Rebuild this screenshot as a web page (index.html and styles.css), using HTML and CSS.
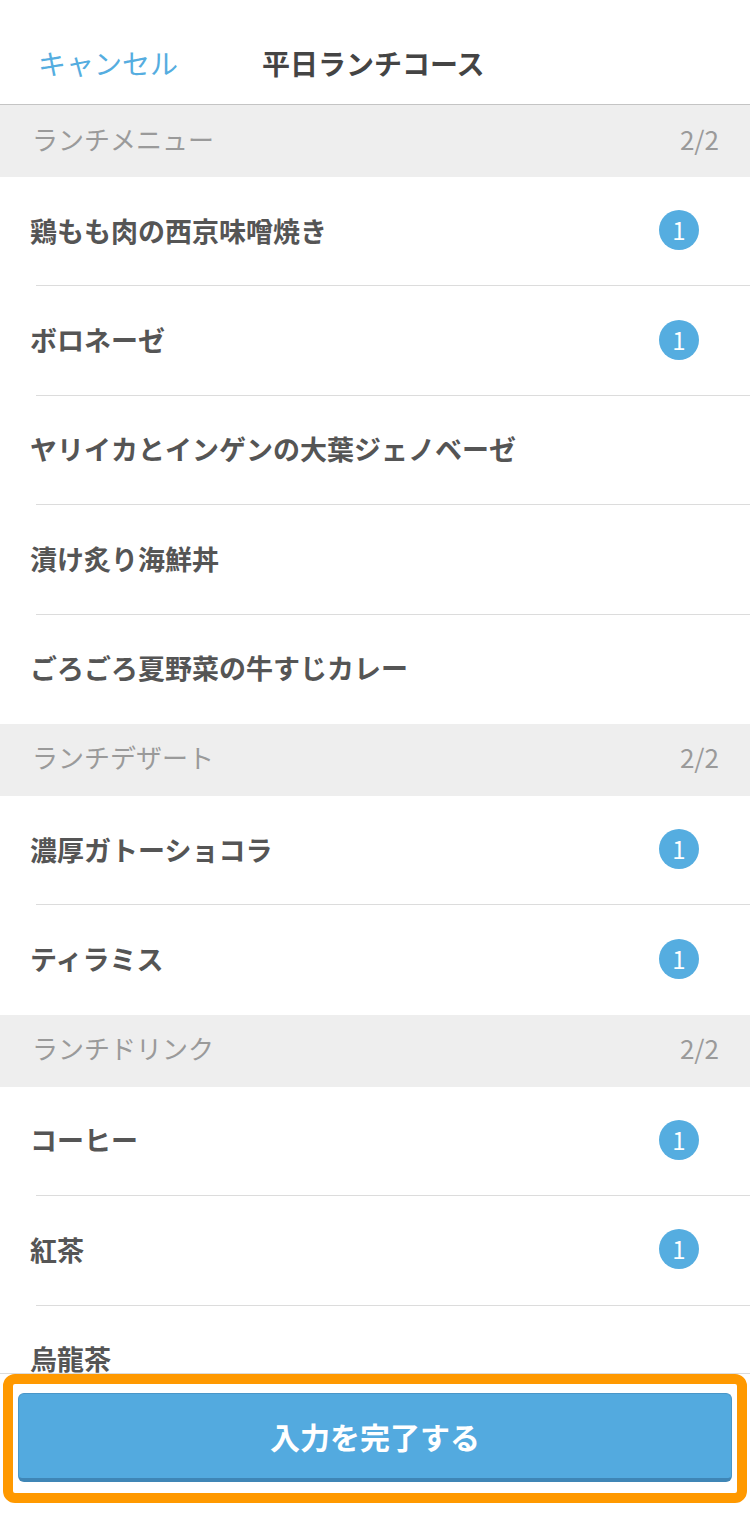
FILE: index.html
```html
<!DOCTYPE html>
<html lang="ja">
<head>
<meta charset="utf-8">
<title>平日ランチコース</title>
<link rel="stylesheet" href="styles.css">
</head>
<body>
<div class="screen">
  <header class="nav">
    <span class="nav-cancel">キャンセル</span>
    <span class="nav-title">平日ランチコース</span>
  </header>

  <main class="list">
    <section class="group">
      <div class="group-head"><span>ランチメニュー</span><span class="count">2/2</span></div>
      <ul class="items">
        <li class="item"><span>鶏もも肉の西京味噌焼き</span><span class="badge">1</span></li>
        <li class="item"><span>ボロネーゼ</span><span class="badge">1</span></li>
        <li class="item"><span>ヤリイカとインゲンの大葉ジェノベーゼ</span></li>
        <li class="item"><span>漬け炙り海鮮丼</span></li>
        <li class="item"><span>ごろごろ夏野菜の牛すじカレー</span></li>
      </ul>
    </section>
    <section class="group">
      <div class="group-head"><span>ランチデザート</span><span class="count">2/2</span></div>
      <ul class="items">
        <li class="item"><span>濃厚ガトーショコラ</span><span class="badge">1</span></li>
        <li class="item"><span>ティラミス</span><span class="badge">1</span></li>
      </ul>
    </section>
    <section class="group">
      <div class="group-head"><span>ランチドリンク</span><span class="count">2/2</span></div>
      <ul class="items">
        <li class="item"><span>コーヒー</span><span class="badge">1</span></li>
        <li class="item"><span>紅茶</span><span class="badge">1</span></li>
        <li class="item"><span>烏龍茶</span></li>
      </ul>
    </section>
  </main>

  <footer class="footer">
    <div class="highlight">
      <button class="done-btn" type="button">入力を完了する</button>
    </div>
  </footer>
</div>
</body>
</html>
```

FILE: styles.css
```css
* {
  box-sizing: border-box;
}

html, body {
  margin: 0;
  padding: 0;
  background: #ffffff;
}

body {
  font-family: "Noto Sans CJK JP", "Noto Sans", sans-serif;
  color: #555555;
}

.screen {
  position: relative;
  width: 750px;
  height: 1530px;
  overflow: hidden;
  background: #ffffff;
}

.nav {
  height: 105px;
  display: flex;
  align-items: center;
  padding-top: 22px;
  border-bottom: 1px solid #c4c4c4;
}

.nav-cancel {
  margin-left: 38px;
  font-size: 28px;
  color: #55ade0;
  width: 140px;
  line-height: 1;
}

.nav-title {
  margin-left: 84px;
  font-size: 28px;
  font-weight: 700;
  color: #444444;
  line-height: 1;
}

.list {
  display: flex;
  flex-direction: column;
}

.group-head {
  height: 72px;
  background: #eeeeee;
  display: flex;
  align-items: center;
  justify-content: space-between;
  padding: 0 31px 6px 32px;
  font-size: 26px;
  color: #9a9a9a;
}

.count {
  font-size: 26px;
}

.items {
  list-style: none;
  margin: 0;
  padding: 0;
}

.item {
  height: 109.4px;
  display: flex;
  align-items: center;
  justify-content: space-between;
  padding: 0 51px 3px 30px;
  font-size: 27px;
  font-weight: 700;
  color: #555555;
  background: linear-gradient(#dcdcdc, #dcdcdc) no-repeat right bottom / calc(100% - 36px) 1px;
}

.group:nth-child(1) .item:last-child,
.group:nth-child(2) .item:last-child {
  background: none;
}

.badge {
  width: 40px;
  height: 40px;
  border-radius: 50%;
  background: #55ade0;
  color: #ffffff;
  font-size: 24px;
  font-weight: 400;
  display: flex;
  align-items: center;
  justify-content: center;
  line-height: 1;
}

.footer {
  position: absolute;
  left: 0;
  right: 0;
  bottom: 0;
  height: 157px;
  background: #ffffff;
  border-top: 1px solid #dcdcdc;
  padding: 0 3px;
}

.highlight {
  height: 129px;
  border: 10px solid #ff9900;
  border-radius: 12px;
  background: #ffffff;
  padding: 9px 5px 0 5px;
}

.done-btn {
  display: block;
  width: 100%;
  height: 89px;
  margin: 0;
  background: #53aadf;
  border: 1px solid #4a96c8;
  border-bottom: 4px solid #3f86b6;
  border-radius: 6px;
  color: #ffffff;
  font-family: "Noto Sans CJK JP", "Noto Sans", sans-serif;
  font-size: 30px;
  font-weight: 700;
  letter-spacing: 0;
  padding: 0;
}
```
